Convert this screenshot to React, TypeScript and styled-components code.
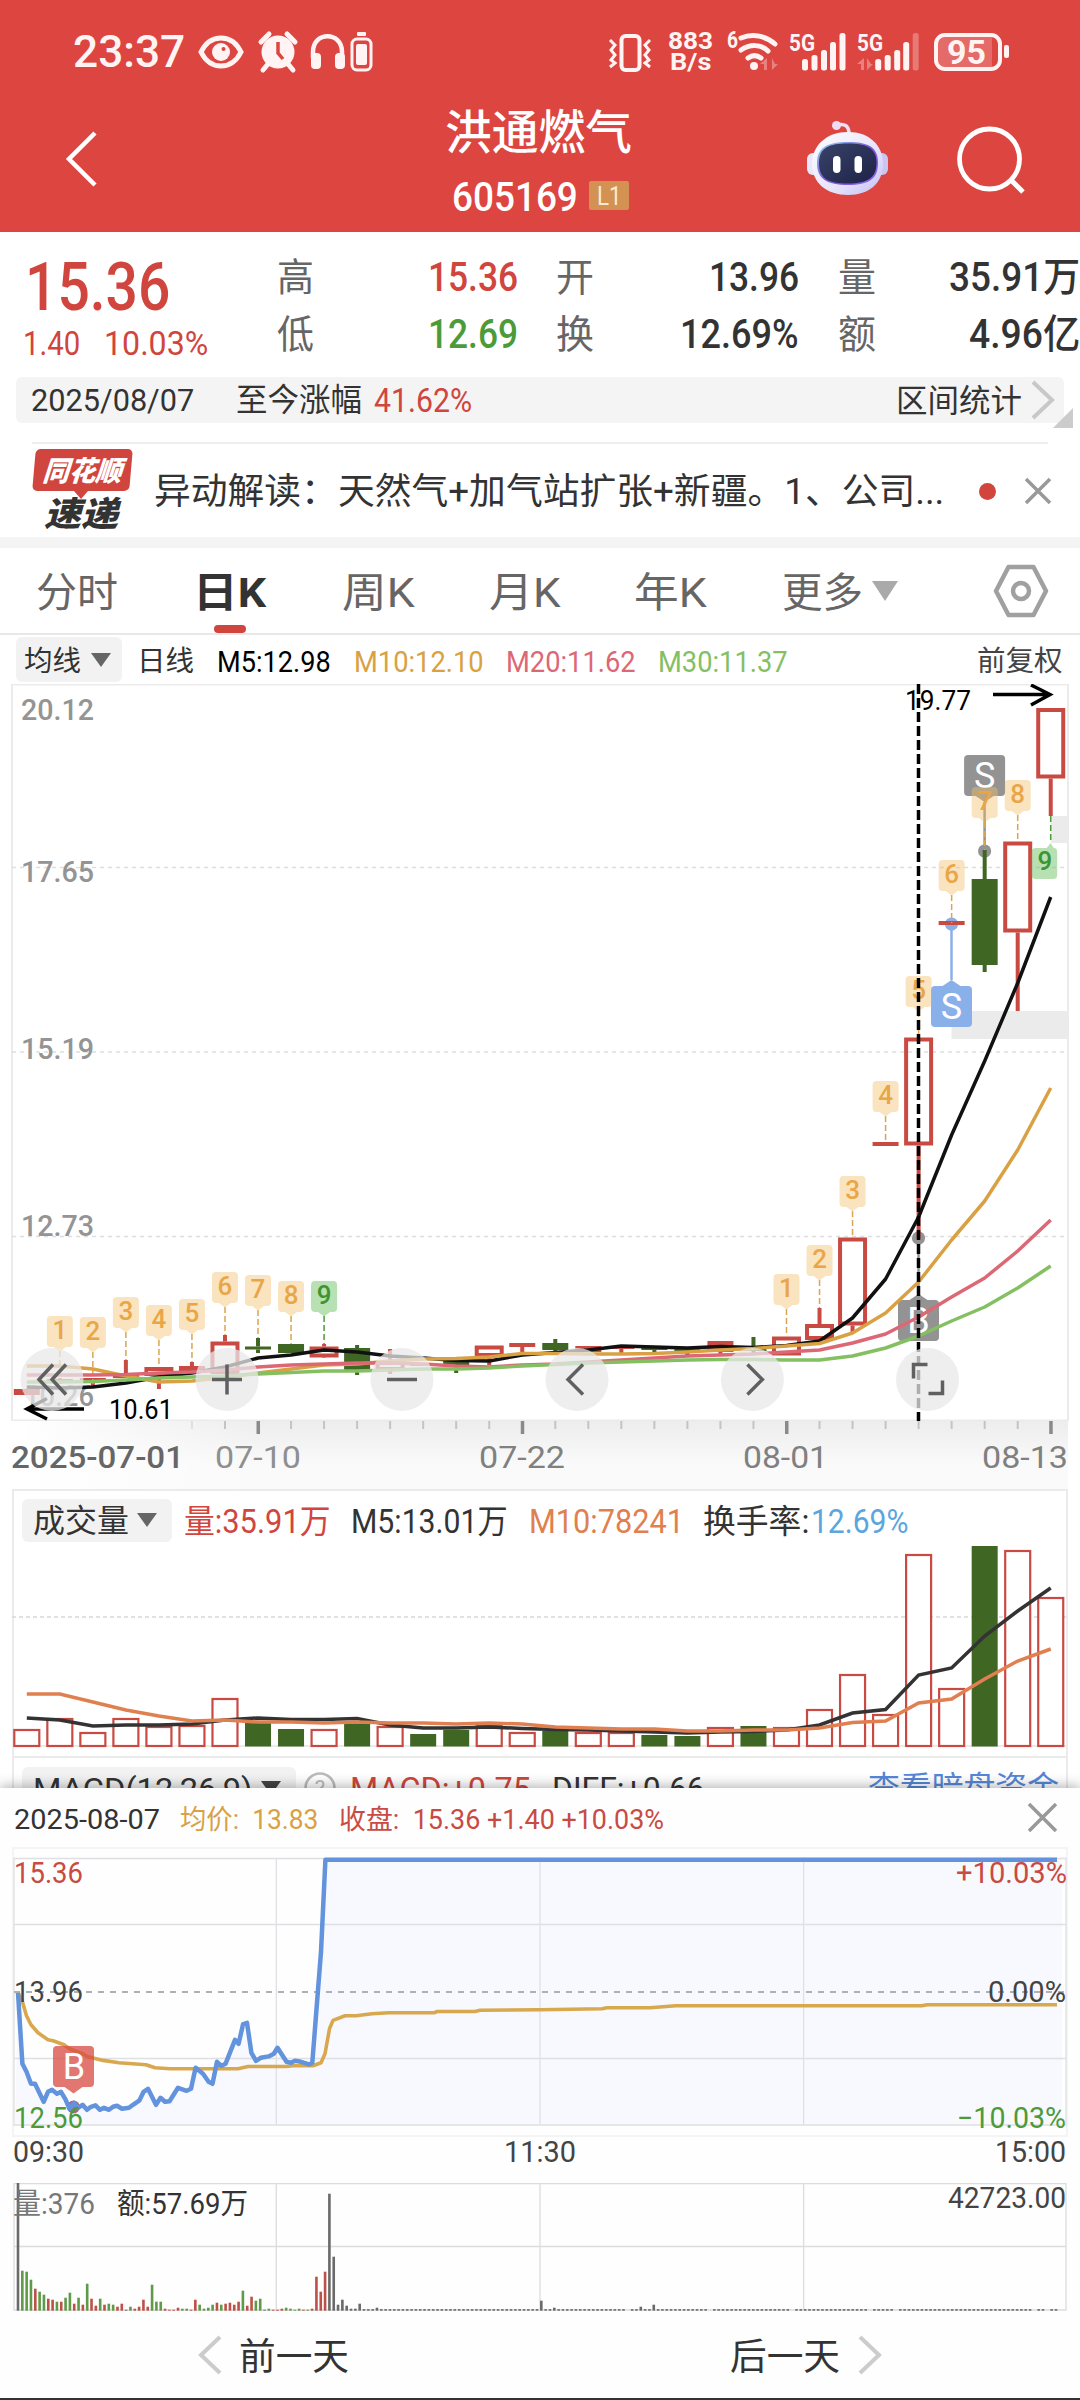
import React, { useLayoutEffect, useRef, useState } from 'react';
import styled, { createGlobalStyle } from 'styled-components';

const FONT = `Roboto, "Noto Sans CJK SC", sans-serif`;
const RED = '#d0453d';
const GREEN = '#4d9a38';
const INK = '#333';
const UP = '#c94a43';
const DOWN = '#3f6623';

const Global = createGlobalStyle`
  body { margin: 0; background: #fff; }
  * { box-sizing: border-box; }
  svg { display: block; flex-shrink: 0; }
  svg text { font-family: ${FONT}; }
`;

/* ---------- fitted text ---------- */
const FitBox = styled.span<{ $w: number; $ml?: number; $mt?: number; $size: number; $color?: string; $weight?: number; $italic?: boolean }>`
  display: block;
  flex: none;
  width: ${(p) => p.$w}px;
  margin-left: ${(p) => p.$ml ?? 0}px;
  margin-top: ${(p) => p.$mt ?? 0}px;
  font-family: ${FONT};
  font-size: ${(p) => p.$size}px;
  font-weight: ${(p) => p.$weight ?? 400};
  font-style: ${(p) => (p.$italic ? 'italic' : 'normal')};
  line-height: 1.17;
  height: 1.17em;
  color: ${(p) => p.$color ?? INK};
  white-space: nowrap;
`;
const FitInner = styled.span`
  display: inline-block;
  transform-origin: 0 50%;
`;
type FitProps = { w: number; size: number; ml?: number; mt?: number; color?: string; weight?: number; italic?: boolean; dy?: number; children: React.ReactNode };
function Fit({ w, size, ml, mt, color, weight, italic, dy = 1.5, children }: FitProps) {
  const ref = useRef<HTMLSpanElement>(null);
  const [scale, setScale] = useState(1);
  useLayoutEffect(() => {
    if (ref.current && ref.current.offsetWidth) setScale(w / ref.current.offsetWidth);
  }, [w, size]);
  return (
    <FitBox $w={w} $ml={ml} $mt={mt} $size={size} $color={color} $weight={weight} $italic={italic}>
      <FitInner ref={ref} style={{ transform: `translateY(${dy}px) scaleX(${scale})` }}>{children}</FitInner>
    </FitBox>
  );
}

/* ---------- page ---------- */
const Screen = styled.main`
  position: relative;
  width: 1080px;
  height: 2400px;
  overflow: hidden;
  display: flex;
  flex-direction: column;
  background: #fff;
`;
const Header = styled.header`
  flex: none;
  height: 232px;
  background: #dd4540;
  display: flex;
  flex-direction: column;
`;
const StatusBar = styled.div`
  display: flex;
  justify-content: space-between;
  height: 80px;
  padding: 0 70px 0 73px;
`;
const StatusGroup = styled.div<{ $gap?: number }>`
  display: flex;
  align-items: center;
  gap: ${(p) => p.$gap ?? 0}px;
  height: 103px;
`;
const SpeedStack = styled.div`
  display: flex;
  flex-direction: column;
  margin: 0 13px 0 16px;
`;
const NavBar = styled.nav`
  display: flex;
  align-items: flex-start;
  height: 152px;
`;
const NavIcon = styled.div<{ $w: number; $pt: number }>`
  flex: none;
  width: ${(p) => p.$w}px;
  padding-top: ${(p) => p.$pt}px;
`;
const TitleBlock = styled.div`
  flex: none;
  width: 427px;
  padding-top: 23px;
`;
const CodeRow = styled.div`
  display: flex;
  align-items: center;
  margin-top: 14px;
`;
const LevelBadge = styled.span`
  display: flex;
  align-items: center;
  width: 40px;
  height: 29px;
  margin-left: 11px;
  padding-left: 8px;
  border-radius: 2px;
  background: #d39152;
`;

const Quote = styled.section`
  flex: none;
  display: flex;
  height: 145px;
  padding-left: 25px;
`;
const PriceBlock = styled.div`
  width: 253px;
  padding-top: 14px;
`;
const ChangeRow = styled.div`
  display: flex;
`;
const StatGrid = styled.div`
  display: grid;
  grid-template-columns: 240px 281px 281px;
  grid-template-rows: 57px 57px;
  padding-top: 16px;
`;
const Stat = styled.div<{ $w: number }>`
  display: flex;
  align-items: center;
  justify-content: space-between;
  width: ${(p) => p.$w}px;
  justify-self: end;
`;
const Spacer = styled.span<{ $w?: number }>`
  flex: ${(p) => (p.$w ? 'none' : '1')};
  width: ${(p) => p.$w ?? 0}px;
`;

const RangeWrap = styled.div`
  flex: none;
  display: flex;
  height: 66px;
  padding-left: 16px;
`;
const RangeBar = styled.div`
  display: flex;
  align-items: center;
  width: 1048px;
  height: 46px;
  padding: 0 9px 0 15px;
  border-radius: 6px;
  background: #f4f4f4;
`;
const Corner = styled.span`
  width: 0;
  height: 0;
  margin: 31px 0 0 -11px;
  border-left: 20px solid transparent;
  border-bottom: 20px solid #ccc;
`;
const News = styled.section`
  flex: none;
  display: flex;
  height: 95px;
  margin: -1px 32px 0;
  border-top: 2px solid #eee;
`;
const Logo = styled.div`
  flex: none;
  width: 122px;
  padding-top: 5px;
`;
const LogoTop = styled.div`
  display: flex;
  align-items: center;
  width: 97px;
  height: 42px;
  margin-left: 2px;
  padding-left: 9px;
  border-radius: 5px;
  background: ${RED};
  transform: skewX(-5deg);
`;
const LogoTip = styled.div`
  width: 0;
  height: 0;
  margin-left: 42px;
  border: 7px solid transparent;
  border-top: 8px solid ${RED};
  border-bottom: 0;
`;
const NewsLine = styled.div`
  display: flex;
  align-items: center;
  height: 94px;
`;
const Dot = styled.i`
  width: 17px;
  height: 17px;
  margin: 0 28px 0 35px;
  border-radius: 50%;
  background: ${RED};
`;
const Band = styled.div`
  flex: none;
  height: 11px;
  background: #f4f4f4;
`;
const Tabs = styled.div`
  flex: none;
  display: flex;
  height: 87px;
  border-bottom: 2px solid #e8e8e8;
`;
const Tab = styled.div<{ $ml: number; $pt?: number }>`
  display: flex;
  flex-direction: column;
  align-items: center;
  margin-left: ${(p) => p.$ml}px;
  padding-top: ${(p) => p.$pt ?? 19}px;
`;
const TabText = styled.div`
  display: flex;
  align-items: center;
  height: 48px;
`;
const Indicator = styled.i`
  width: 32px;
  height: 8px;
  margin-top: 10px;
  border-radius: 4px;
  background: ${RED};
`;
const Arrow = styled.i<{ $w: number; $h: number; $c: string; $ml?: number }>`
  flex: none;
  width: 0;
  height: 0;
  margin-left: ${(p) => p.$ml ?? 8}px;
  border: ${(p) => p.$w / 2}px solid transparent;
  border-top: ${(p) => p.$h}px solid ${(p) => p.$c};
  border-bottom: 0;
`;
const Legend = styled.div<{ $h: number; $pl: number; $pt?: number; $pr?: number }>`
  flex: none;
  display: flex;
  align-items: center;
  height: ${(p) => p.$h}px;
  padding: ${(p) => p.$pt ?? 0}px ${(p) => p.$pr ?? 17}px 0 ${(p) => p.$pl}px;
`;
const Picker = styled.div<{ $w: number; $h: number; $pl: number }>`
  display: flex;
  align-items: center;
  width: ${(p) => p.$w}px;
  height: ${(p) => p.$h}px;
  padding-left: ${(p) => p.$pl}px;
  border-radius: 6px;
  background: #f2f2f2;
`;
const Axis = styled.div`
  flex: none;
  height: 68px;
  background: linear-gradient(90deg, #fff 0 20px, rgba(255, 255, 255, 0) 260px), linear-gradient(#ededed, #fafafa 65%);
  margin-right: 12px;
`;
const Panel = styled.section<{ $h: number }>`
  flex: none;
  height: ${(p) => p.$h}px;
  margin: 0 12px;
  border: 2px solid #ebebeb;
  border-bottom: 0;
`;
const PanelChart = styled.div`
  margin: 0 -14px;
`;

const Sheet = styled.section`
  position: absolute;
  left: 0;
  bottom: 0;
  width: 1080px;
  height: 612px;
  display: flex;
  flex-direction: column;
  background: #fefefe;
  border-bottom: 2px solid #333;
  box-shadow: 0 -2px 12px rgba(0, 0, 0, 0.3);
`;
const SheetHead = styled.div`
  display: flex;
  align-items: center;
  height: 61px;
  padding: 0 22px 0 14px;
`;
const DayNav = styled.div`
  display: flex;
  align-items: center;
  height: 88px;
  padding-left: 198px;
`;

/* ---------- icons ---------- */
const W = '#fff4f3';
const StatusLeftIcons = () => (
  <svg width="176" height="44" viewBox="198 30 176 44">
    <path d="M201 52c5-10 12-14 20-14s15 4 20 14c-5 10-12 14-20 14s-15-4-20-14z" fill="none" stroke={W} strokeWidth="5" />
    <circle cx="221" cy="52" r="9" fill={W} /><circle cx="223.5" cy="49" r="2" fill="#dd4540" />
    <circle cx="278" cy="52" r="16.5" fill={W} />
    <path d="M261 42l8-8M295 42l-8-8M268 64l-5 6M288 64l5 6" stroke={W} strokeWidth="5" strokeLinecap="round" />
    <path d="M278 42v11l5 6" fill="none" stroke="#dd4540" strokeWidth="3.5" />
    <path d="M313 58v-6c0-21 29-21 29 0v6" fill="none" stroke={W} strokeWidth="4.5" />
    <rect x="311" y="53" width="10" height="16" rx="4" fill={W} /><rect x="335" y="53" width="10" height="16" rx="4" fill={W} />
    <rect x="352" y="39" width="19" height="31" rx="5" fill="none" stroke={W} strokeWidth="3" />
    <rect x="356" y="44" width="11" height="21" rx="2" fill={W} /><rect x="357" y="32" width="9" height="4" rx="1" fill={W} />
  </svg>
);
const Vibrate = () => (
  <svg width="44" height="40" viewBox="609 31 44 40">
    <rect x="622.5" y="35" width="18" height="34" rx="4" fill="none" stroke={W} strokeWidth="4" />
    <path d="M611 39l5 5-4 5 4 5-4 5 4 3-5 4M651 39l-5 5 4 5-4 5 4 5-4 3 5 4" fill="none" stroke={W} strokeWidth="3" />
  </svg>
);
const Net = () => (
  <svg width="284" height="44" viewBox="726 29 284 44">
    <text x="727" y="47" fontSize="23" fontWeight="700" fill={W} textLength="11" lengthAdjust="spacingAndGlyphs">6</text>
    <g fill="none" stroke={W} strokeWidth="5" strokeLinecap="round">
      <path d="M741 37c12-5 25-2 34 6M741 49c9-6 20-6 27 1M748 57c4-3 9-3 13 0" />
    </g>
    <circle cx="754" cy="65" r="4" fill={W} />
    <path d="M760 63l7-6v12h-3v-6zM772 57v12l6-6h-3z" fill={W} opacity=".35" />
    <text x="789" y="50" fontSize="24" fontWeight="700" fill={W} textLength="26" lengthAdjust="spacingAndGlyphs">5G</text>
    <text x="857" y="50" fontSize="24" fontWeight="700" fill={W} textLength="26" lengthAdjust="spacingAndGlyphs">5G</text>
    {[[802, 58], [811.5, 54], [821, 49], [830, 41], [839.5, 32]].map(([x, y], i) => (
      <g key={x} fill={W}>
        <rect x={x} y={y} width="6" height={69.5 - y} rx="2.5" />
        <rect x={x + 73.2} y={y} width="6" height={69.5 - y} rx="2.5" opacity={i === 4 ? 0.3 : 1} />
      </g>
    ))}
    <path d="M857 63l7-6v12h-3v-6zM867 57v12l6-6h-2z" fill={W} opacity=".35" />
    <rect x="936" y="34" width="64" height="34" rx="9" fill="none" stroke={W} strokeWidth="4" />
    <path d="M945 36h47v30h-47q-7 0-7-7v-16q0-7 7-7z" fill={W} opacity=".22" />
    <rect x="1004" y="44" width="5" height="13" rx="2" fill={W} />
    <text x="947" y="62.5" fontSize="33" fontWeight="700" fill={W} textLength="39" lengthAdjust="spacingAndGlyphs">95</text>
  </svg>
);
const Robot = () => (
  <svg width="84" height="78" viewBox="806 120 84 78">
    <defs>
      <linearGradient id="rb" x1="0" y1="0" x2="1" y2="1"><stop offset="0" stopColor="#fff" /><stop offset=".6" stopColor="#e6e4fa" /><stop offset="1" stopColor="#c3c1f3" /></linearGradient>
      <linearGradient id="rf" x1="0" y1="0" x2="1" y2="1"><stop offset="0" stopColor="#8fdcf0" /><stop offset=".5" stopColor="#7a52d8" /><stop offset="1" stopColor="#8d62ee" /></linearGradient>
      <linearGradient id="rd" x1="0" y1="0" x2="1" y2="1"><stop offset="0" stopColor="#3a4268" /><stop offset="1" stopColor="#1d2347" /></linearGradient>
    </defs>
    <path d="M837 125c8-2 12 1 12 9" fill="none" stroke="#f3dff0" strokeWidth="3.5" />
    <circle cx="836.5" cy="125.5" r="4.5" fill="#f0dcf0" />
    <rect x="807" y="153" width="14" height="22" rx="6" fill="#e9e8fb" /><rect x="874" y="153" width="14" height="22" rx="6" fill="#c9c7f2" />
    <path d="M848 132c21 0 35 13 35 32s-14 31-35 31-36-12-36-31 15-32 36-32z" fill="url(#rb)" />
    <path d="M848 142c20 0 30 5 30 21s-9 22-30 22-31-6-31-22 11-21 31-21z" fill="url(#rf)" />
    <path d="M848 143.500c19 0 28.500 5 28.500 19.500s-8.500 20.500-28.500 20.500-29-5-29-20.500 10-19.500 29-19.500z" fill="url(#rd)" />
    <rect x="833" y="156" width="7.500" height="17" rx="3.700" fill="#fff" /><rect x="854.500" y="156" width="7.500" height="17" rx="3.700" fill="#fff" />
  </svg>
);
const Chevron = ({ w, h, c, sw, right }: { w: number; h: number; c: string; sw: number; right?: boolean }) => (
  <svg width={w} height={h} viewBox={`0 0 ${w} ${h}`}>
    <path d={right ? `M2 2L${w - 3} ${h / 2}L2 ${h - 2}` : `M${w - 2} 2L3 ${h / 2}L${w - 2} ${h - 2}`} fill="none" stroke={c} strokeWidth={sw} />
  </svg>
);
const Cross = ({ s }: { s: number }) => (
  <svg width={s} height={s} viewBox={`0 0 ${s} ${s}`}><path d={`M2 2L${s - 2} ${s - 2}M${s - 2} 2L2 ${s - 2}`} stroke="#999" strokeWidth="3.5" /></svg>
);

/* ---------- chart data ---------- */
const cx = (i: number) => 26.8 + i * 33.03;
const line = (ys: number[]) => ys.map((y, i) => `${cx(i).toFixed(1)},${y}`).join(' ');

// [index, body top, body bottom, wick top, wick bottom, kind]
type Candle = [number, number, number, number, number, 'r' | 'g' | 'f'];
const candles: Candle[] = [
  [0, 1389, 1395, 1389, 1395, 'f'], [1, 1379, 1382, 1378, 1384, 'f'], [2, 1378, 1382, 1378, 1386, 'f'], [3, 1374, 1378, 1360, 1378, 'f'],
  [4, 1367, 1376, 1367, 1389, 'r'], [5, 1366, 1372, 1362, 1372, 'f'], [6, 1341.5, 1374, 1335, 1374, 'r'], [7, 1346.500, 1349.500, 1338, 1353, 'g'],
  [8, 1344, 1353, 1344, 1353, 'g'], [9, 1346.500, 1357.500, 1344, 1358, 'r'], [10, 1348, 1370, 1345, 1375, 'g'], [11, 1361, 1371, 1349, 1374, 'r'],
  [12, 1363, 1366, 1363, 1366, 'f'], [13, 1360, 1366, 1360, 1373, 'g'], [14, 1345.500, 1357, 1345.500, 1365, 'r'], [15, 1343, 1347, 1343, 1352, 'f'],
  [16, 1343, 1350, 1339, 1352, 'g'], [17, 1346, 1352, 1346, 1352, 'f'], [18, 1346, 1349, 1346, 1353, 'f'], [19, 1347, 1350, 1347, 1353, 'g'],
  [20, 1348, 1351, 1348, 1356, 'g'], [21, 1341, 1352, 1341, 1355, 'f'], [22, 1348, 1351, 1337, 1355, 'g'], [23, 1336.500, 1355.500, 1336.500, 1355, 'r'],
  [24, 1324, 1340, 1308, 1340, 'r'], [25, 1237.500, 1325.500, 1237.500, 1333, 'r'], [26, 1142, 1146, 1142, 1146, 'f'], [27, 1037.500, 1145.500, 1037.500, 1238, 'r'],
  [28, 921, 925, 921, 925, 'f'], [29, 879, 965, 850, 972, 'g'], [30, 841.500, 932.500, 841.500, 1011, 'r'], [31, 708, 778.500, 708, 816, 'r'],
];
const ma5 = [1387, 1388, 1387, 1383, 1377, 1373, 1367, 1358, 1355, 1350, 1352, 1356, 1358, 1360.5, 1361, 1355, 1352.5, 1350, 1346, 1347, 1348, 1346.5, 1347.5, 1345.5, 1341, 1318, 1279, 1217, 1135, 1061, 983, 897];
const ma10 = [1366, 1366, 1369, 1376, 1382, 1381, 1377.5, 1373, 1369, 1365, 1364, 1361, 1359, 1358.5, 1357, 1353.5, 1353.5, 1354, 1354, 1353.5, 1352, 1350, 1348.5, 1346, 1343.5, 1333, 1313, 1282, 1240, 1201, 1150, 1088];
const ma20 = [1375, 1375, 1375, 1374.5, 1373, 1372, 1370, 1367, 1365, 1364, 1363, 1363, 1364, 1366, 1367, 1365, 1364, 1362, 1360, 1358, 1356, 1355, 1354, 1352, 1350, 1343, 1334, 1317, 1297, 1278, 1251, 1220];
const ma30 = [1382, 1382, 1381.5, 1380, 1378, 1377, 1376, 1374, 1372.5, 1371, 1371, 1370, 1369, 1369, 1368, 1366, 1364.5, 1363, 1362, 1361, 1360, 1359.5, 1359.5, 1360, 1360, 1356, 1348, 1336, 1321, 1307, 1288, 1266];
// [index, number, badge top, leader end]
const counts: [number, number, number, number][] = [
  [1, 1, 1316, 1378], [2, 2, 1317, 1384], [3, 3, 1297, 1360], [4, 4, 1305, 1367], [5, 5, 1299, 1362], [6, 6, 1272, 1335], [7, 7, 1275, 1338], [8, 8, 1281, 1344], [9, 9, 1281, 1344],
  [23, 1, 1274, 1336], [24, 2, 1245, 1308], [25, 3, 1176, 1238], [26, 4, 1081, 1143], [27, 5, 976, 1037], [28, 6, 860, 923], [29, 7, 787, 850], [30, 8, 780, 841],
];

const Label = ({ x, y, w, s, c, wt, children }: { x: number; y: number; w: number; s: number; c: string; wt?: number; children: string }) => (
  <text x={x} y={y} fontSize={s} fontWeight={wt ?? 400} fill={c} textLength={w} lengthAdjust="spacingAndGlyphs">{children}</text>
);

function TradeMark({ x, top, up, letter, fill, dot }: { x: number; top: number; up?: boolean; letter: string; fill: string; dot: number }) {
  return (
    <g>
      <rect x={x - 20.5} y={top} width="41" height="41" rx="4" fill={fill} />
      <path d={up ? `M${x - 9} ${top}l9-6 9 6z` : `M${x - 9} ${top + 41}l9 6 9-6z`} fill={fill} />
      <path d={`M${x} ${up ? top - 6 : top + 47}V${dot}`} stroke={fill} strokeWidth="2.500" />
      <circle cx={x} cy={dot} r="6.600" fill={fill} />
      <text x={x} y={top + 33} fontSize="36" fill="#fff" textAnchor="middle">{letter}</text>
    </g>
  );
}

const KChart = () => (
  <svg width="1080" height="737" viewBox="0 684 1080 737">
    <rect x="12" y="684.500" width="1056" height="736" fill="none" stroke="#ebebeb" strokeWidth="2" />
    {[867.5, 1052, 1236.5].map((y) => <path key={y} d={`M12 ${y}H1068`} stroke="#dedede" strokeWidth="1.300" strokeDasharray="4 4" />)}
    <path d="M1051 816h17v27h-17zM951.500 1011h116.500v28h-116.500z" fill="#ebebeb" />
    <Label x={21} y={719.5} w={73} s={30} c="#949494" wt={500}>20.12</Label>
    <Label x={21} y={882} w={73} s={30} c="#949494" wt={500}>17.65</Label>
    <Label x={21} y={1059} w={73} s={30} c="#949494" wt={500}>15.19</Label>
    <Label x={21} y={1236} w={73} s={30} c="#949494" wt={500}>12.73</Label>
    <Label x={24} y={1406} w={70} s={30} c="#949494" wt={500}>10.26</Label>
    <TradeMark x={984.6} top={755} letter="S" fill="#939393" dot={851} />
    <TradeMark x={951.5} top={986} up letter="S" fill="#8ab0ea" dot={924} />
    <TradeMark x={918.5} top={1300} up letter="B" fill="#939393" dot={1238} />
    {candles.map(([i, a, b, wt, wb, k]) => {
      const x = cx(i);
      const c = k === 'g' ? DOWN : UP;
      return (
        <g key={i} fill={c} stroke="none">
          {wt < a && <rect x={x - 2} y={wt} width="4" height={a - wt} />}
          {wb > b && <rect x={x - 2} y={b} width="4" height={wb - b} />}
          {k === 'r'
            ? <rect x={x - 12.5} y={a + 2} width="25" height={Math.max(b - a - 4, 1)} fill={i === 27 ? 'none' : '#fff'} stroke={c} strokeWidth="4" />
            : <rect x={x - 13} y={a} width="26" height={b - a} />}
        </g>
      );
    })}
    {counts.map(([i, n, t, e]) => {
      const x = cx(i);
      const g = n === 9;
      return (
        <g key={i}>
          <path d={`M${x} ${t + 35}V${e}`} stroke={g ? '#4d9a38' : '#dba550'} strokeWidth="1.500" strokeDasharray="6 3" />
          <path d={`M${x - 9} ${t}h18q4 0 4 4v23q0 4-4 4h-3l-6 4.500-6-4.500h-3q-4 0-4-4v-23q0-4 4-4z`} fill={g ? '#70c468' : '#f3bd6a'} opacity={g ? 0.5 : 0.43} />
          <text x={x} y={t + 22.5} fontSize="26" fontWeight="500" textAnchor="middle" fill={g ? '#3f9433' : '#e9a647'}>{n}</text>
        </g>
      );
    })}
    <path d="M1050.700 816V843" stroke="#4d9a38" strokeWidth="1.500" strokeDasharray="6 3" />
    <path d="M1035.700 848h11l4-5 3 5q3.500 0 3.500 4v23q0 4-4 4h-17.500q-4 0-4-4v-23q0-4 4-4z" fill="#70c468" opacity=".5" />
    <text x="1045" y="870" fontSize="26" fontWeight="500" textAnchor="middle" fill="#3f9433">9</text>
    <g fill="none" strokeWidth="3.500" strokeLinejoin="round">
      <polyline points={line(ma5)} stroke="#111" />
      <polyline points={line(ma10)} stroke="#d9a143" />
      <polyline points={line(ma20)} stroke="#dc6876" />
      <polyline points={line(ma30)} stroke="#84bf62" />
    </g>
    <path d="M918.500 684V1421" stroke="#000" strokeWidth="3.500" strokeDasharray="10 4" />
    <g fill="none" stroke="#000" strokeWidth="3.500">
      <path d="M993 694.500H1050M1031 685L1050 694.500L1031 705" />
      <path d="M84 1409H27M47 1398.500L27 1409L47 1419" />
    </g>
    <Label x={905} y={709.5} w={66} s={27} c="#000">19.77</Label>
    <Label x={109} y={1418.5} w={64} s={27} c="#000">10.61</Label>
    {[52, 227, 402, 577, 752.4, 927.5].map((x, i) => (
      <g key={x} transform={`translate(${x} 1379.500)`}>
        <circle r="31.500" fill="#e8e8e8" opacity=".75" />
        <path
          d={['M1-15L-13 0L1 15M14-15L0 0L14 15', 'M-15 0H15M0-15V15', 'M-15 0H15', 'M6-15L-9 0L6 15', 'M-5-15L10 0L-5 15', 'M0-15H-14V-1M1 14H15V1'][i]}
          fill="none" stroke="#606060" strokeWidth="3.500"
        />
      </g>
    ))}
  </svg>
);

const AxisChart = () => (
  <svg width="1080" height="68" viewBox="0 1421 1080 68">
    {Array.from({ length: 27 }, (_, k) => k + 5).map((i) => {
      const major = [7, 15, 23, 31].includes(i);
      return <rect key={i} x={cx(i) - (major ? 1.5 : 1)} y="1421" width={major ? 3.5 : 2} height={major ? 13 : 8} fill={major ? '#8a8a8a' : '#c4c4c4'} opacity={i === 5 ? 0.4 : 1} />;
    })}
    <Label x={11} y={1468} w={173} s={32} c="#666" wt={500}>2025-07-01</Label>
    <Label x={215} y={1468} w={86} s={32} c="#8f8f8f">07-10</Label>
    <Label x={479} y={1468} w={86} s={32} c="#808080">07-22</Label>
    <Label x={743} y={1468} w={85} s={32} c="#808080">08-01</Label>
    <Label x={982} y={1468} w={86} s={32} c="#808080">08-13</Label>
  </svg>
);

const volTop = [1729, 1718, 1732, 1718, 1726, 1725, 1698, 1723, 1729, 1729, 1723, 1726, 1734, 1730, 1725, 1732, 1731, 1732, 1732, 1735, 1736, 1727, 1726, 1727, 1709, 1674, 1714, 1554, 1688, 1546, 1550, 1597];
const volGreen = [7, 8, 10, 12, 13, 16, 19, 20, 22, 29];
const v5 = [1718, 1720, 1726, 1725, 1725, 1724, 1720, 1718, 1719.5, 1719.5, 1718.5, 1725, 1728, 1728, 1727, 1728.5, 1729.5, 1730, 1731, 1732, 1733, 1732, 1731.5, 1730, 1725, 1713, 1709.5, 1675, 1668, 1636, 1611, 1588];
const v10 = [1694, 1694, 1702, 1710, 1716, 1721, 1720, 1722, 1722, 1723, 1722, 1723, 1723, 1724, 1723, 1724, 1727, 1728, 1729, 1729, 1731, 1731, 1730, 1730, 1728, 1722.5, 1721, 1703, 1699, 1679, 1661, 1649];
const VolumeChart = () => (
  <svg width="1080" height="204" viewBox="0 1544 1080 204">
    <path d="M12 1617H1068" stroke="#d8d8d8" strokeWidth="1.300" strokeDasharray="4 3" />
    <path d="M12 1746H1068" stroke="#ebebeb" strokeWidth="2" />
    {volTop.map((t, i) => volGreen.includes(i)
      ? <rect key={i} x={cx(i) - 13} y={t} width="26" height={1746.5 - t} fill={DOWN} />
      : <rect key={i} x={cx(i) - 12.5} y={t + 1} width="25" height={1745 - t} fill="#fff" stroke={UP} strokeWidth="2.200" />)}
    <polyline points={line(v5)} fill="none" stroke="#333" strokeWidth="3.500" />
    <polyline points={line(v10)} fill="none" stroke="#e07f50" strokeWidth="3.500" />
  </svg>
);

const intraday = '18,1994 22.4,2065 26.5,2073 31,2085 35,2085 43.7,2103 48,2093 52,2091 57,2095 61,2093 65.5,2100.5 69.5,2110 74,2104 78,2109 82.6,2106 87,2111 91,2108 95.5,2106.5 100,2111 104,2109 109,2111 113,2108 117,2107 122,2110 129,2109 133,2106 139.5,2101.5 143.6,2093 148,2090 156,2106 160.5,2099 165,2103 169.5,2102.5 178,2089 186.6,2092 191,2090 195.6,2069 203,2075 208.6,2083 212.5,2085 217,2063 221.4,2067 225.5,2065 235,2041 238.6,2045 243,2025.6 247,2024 251.4,2054 256,2062 260.7,2059 268.6,2057.6 273.8,2055 277.5,2049 286.5,2063 291,2064 295,2062 301,2063 309,2065.6 312.3,2064 321,1953 325.4,1861 1057,1861';
const average = '18,1994 22.4,2003 26.5,2017 31,2026 38,2034 48,2041 53,2042 64,2046 69.5,2050 82.6,2055 88,2058 103,2061.6 119,2064 146,2066 155,2069 170,2070 238,2070 248,2067.7 286,2067.7 293,2067 313,2067 321,2064 325,2055 329.5,2030 333,2021.6 345,2017 356,2017 372,2015 389,2014 434,2014 437,2012.7 475,2012.7 480,2011.5 540,2011 602,2010 607,2009 650,2009 676,2007 922,2007 927,2006 1057,2006';
const IntradayChart = () => (
  <svg width="1080" height="336" viewBox="0 1849 1080 336">
    <path d="M13 1850H1067V2138H13z" fill="none" stroke="#f4f4f4" strokeWidth="2" />
    <polygon points={`${intraday} 1062,1861 1062,2127 15,2127`} fill="#f7f9fe" />
    <path d="M14 1860.500H1066V2127H14zM276.300 1860V2127M540 1860V2127M803.600 1860V2127M14 1926.500H1066M14 2060.500H1066" fill="none" stroke="#dfe0e3" strokeWidth="1.300" />
    <path d="M14 1994H1066" stroke="#adb0b5" strokeWidth="1.900" strokeDasharray="6 6" />
    <polyline points={average} fill="none" stroke="#d8a84f" strokeWidth="3.600" strokeLinejoin="round" transform="translate(0 .8)" />
    <g opacity=".75"><rect x="53" y="2048" width="41" height="41" rx="4" fill="#d94a43" /><path d="M64.500 2089l9 6.500 9-6.500z" fill="#d94a43" /></g>
    <circle cx="73.500" cy="2109" r="6.500" fill="#a8638a" />
    <text x="74" y="2081" fontSize="36" fill="#fff" textAnchor="middle">B</text>
    <polyline points={intraday} fill="none" stroke="#6293dc" strokeWidth="4.500" strokeLinejoin="round" transform="translate(0 .8)" />
    <Label x={14} y={1885} w={69} s={29} c={UP}>15.36</Label>
    <Label x={14} y={2003.5} w={69} s={29} c="#444">13.96</Label>
    <Label x={14} y={2129.5} w={69} s={29} c={GREEN}>12.56</Label>
    <Label x={956} y={1884.5} w={111} s={29} c={UP}>+10.03%</Label>
    <Label x={988} y={2003.5} w={78} s={29} c="#444">0.00%</Label>
    <Label x={957} y={2129.5} w={109} s={29} c={GREEN}>−10.03%</Label>
    <Label x={13} y={2164} w={71} s={29} c="#444">09:30</Label>
    <Label x={504} y={2164} w={72} s={29} c="#444">11:30</Label>
    <Label x={995} y={2164} w={71} s={29} c="#444">15:00</Label>
  </svg>
);

const barHeights = [128, 40, 39, 31, 22, 19, 16, 12, 11, 9, 9, 13, 18, 7, 13, 6, 27, 12, 5, 12, 6, 7, 6, 4, 7, 1, 4, 2, 4, 11, 4, 26, 9, 9, 2, 1, 1, 3, 2, 2, 1, 11, 6, 2, 3, 6, 8, 6, 7, 8, 6, 9, 20, 5, 14, 10, 12, 1, 2, 1, 1, 2, 3, 2, 1, 2, 1, 1, 2, 34, 19, 39, 117, 54, 6, 11, 5, 2, 2, 7];
const barKinds = 'kgggrggrrgrggrgrgrrgrggrrgkrrrrgggrrrrggrrggggrgrrrrgrrggrkrrrggggrggrrrrkkkkkkkk'.replace('ggrrrrkkkkkkkk', 'ggrrrrkkkkkkkk');
const colorAt = (i: number) => (i >= 72 || i === 0 || i === 25 || i === 57 ? '#6a6a6a' : i >= 68 || barKinds[i] === 'r' ? '#bd5048' : '#5f9a49');
const lateBars: Record<number, number> = { 83: 3, 121: 10, 124: 3, 144: 4, 147: 6 };
const MinuteVolume = () => (
  <svg width="1080" height="129" viewBox="0 2185 1080 129">
    <path d="M14 2185.700H1066V2312H14zM276.300 2185V2312M540 2185V2312M803.600 2185V2312M14 2248.500H1066" fill="none" stroke="#dcdcdc" strokeWidth="1.300" />
    {Array.from({ length: 241 }, (_, i) => {
      const h = barHeights[i] ?? lateBars[i] ?? ([141, 160, 179, 197, 203, 235, 238].includes(i) ? 0 : 1.6);
      return <rect key={i} x={16.7 + i * 4.325} y={2312.7 - h} width="2.600" height={h} fill={colorAt(i)} />;
    })}
    <Label x={13} y={2215.5} w={82} s={29} c="#777">量:376</Label>
    <Label x={117} y={2215.5} w={131} s={29} c="#333">额:57.69万</Label>
    <Label x={948} y={2209.5} w={118} s={29} c="#444">42723.00</Label>
  </svg>
);

export default function App() {
  return (
    <Screen>
      <Global />
      <Header>
        <StatusBar>
          <StatusGroup $gap={13}>
            <Fit w={112} size={45} color={W} weight={500} dy={0.5}>23:37</Fit>
            <StatusLeftIcons />
          </StatusGroup>
          <StatusGroup>
            <Vibrate />
            <SpeedStack>
              <Fit w={45} mt={1} size={24.5} color={W} weight={700} dy={0}>883</Fit>
              <Fit w={41} ml={2} mt={-8} size={24.5} color={W} weight={700} dy={0}>B/s</Fit>
            </SpeedStack>
            <Net />
          </StatusGroup>
        </StatusBar>
        <NavBar>
          <NavIcon $w={379} $pt={50}>
            <svg width="100" height="58" viewBox="0 130 100 58"><path d="M95 133L69 159L95 185" fill="none" stroke="#fff" strokeWidth="4.500" /></svg>
          </NavIcon>
          <TitleBlock>
            <Fit w={187} ml={66} size={47} color="#fff" weight={500}>洪通燃气</Fit>
            <CodeRow>
              <Fit w={126} ml={73} size={41} color="#fff" weight={500}>605169</Fit>
              <LevelBadge><Fit w={25} size={25} color="#fbe9d2" dy={1}>L1</Fit></LevelBadge>
            </CodeRow>
          </TitleBlock>
          <NavIcon $w={150} $pt={40}><Robot /></NavIcon>
          <NavIcon $w={80} $pt={44}>
            <svg width="72" height="72" viewBox="956 124 72 72"><circle cx="989.500" cy="159" r="30" fill="none" stroke="#fff" strokeWidth="4.800" /><path d="M1011 180l12 12" stroke="#fff" strokeWidth="5" /></svg>
          </NavIcon>
        </NavBar>
      </Header>

      <Quote>
        <PriceBlock>
          <Fit w={145} size={66} color={RED} weight={500} dy={2.5}>15.36</Fit>
          <ChangeRow>
            <Fit w={57} ml={-2} size={34} color={RED} dy={1}>1.40</Fit>
            <Fit w={104} ml={24} size={34} color={RED} dy={1}>10.03%</Fit>
          </ChangeRow>
        </PriceBlock>
        <StatGrid>
          <Stat $w={241}><Fit w={37} size={39} color="#666">高</Fit><Fit w={90} size={40} color={RED} weight={500}>15.36</Fit></Stat>
          <Stat $w={243}><Fit w={38} size={39} color="#666">开</Fit><Fit w={90} size={40} weight={500}>13.96</Fit></Stat>
          <Stat $w={242}><Fit w={38} size={39} color="#666">量</Fit><Fit w={131} size={40} weight={500}>35.91万</Fit></Stat>
          <Stat $w={241}><Fit w={37} size={39} color="#666">低</Fit><Fit w={90} size={40} color={GREEN} weight={500}>12.69</Fit></Stat>
          <Stat $w={243}><Fit w={38} size={39} color="#666">换</Fit><Fit w={119} size={40} weight={500}>12.69%</Fit></Stat>
          <Stat $w={242}><Fit w={38} size={39} color="#666">额</Fit><Fit w={111} size={40} weight={500}>4.96亿</Fit></Stat>
        </StatGrid>
      </Quote>

      <RangeWrap>
        <RangeBar>
          <Fit w={163} size={32} dy={0.5}>2025/08/07</Fit>
          <Fit w={126} ml={42} size={32} dy={0.5}>至今涨幅</Fit>
          <Fit w={98} ml={12} size={33} color={RED} dy={0.5}>41.62%</Fit>
          <Spacer />
          <Fit w={126} size={32}>区间统计</Fit>
          <Spacer $w={9} />
          <Chevron w={24} h={40} c="#c8c8c8" sw={4} right />
        </RangeBar>
        <Corner />
      </RangeWrap>

      <News>
        <Logo>
          <LogoTop><Fit w={79} size={28} color="#fff" weight={900} italic>同花顺</Fit></LogoTop>
          <LogoTip />
          <Fit w={74} ml={12} mt={-6} size={34} weight={900} italic dy={2}>速递</Fit>
        </Logo>
        <NewsLine>
          <Fit w={790} size={36.5} dy={1}>异动解读：天然气+加气站扩张+新疆。1、公司...</Fit>
          <Dot />
          <Cross s={28} />
        </NewsLine>
      </News>
      <Band />

      <Tabs>
        <Tab $ml={36}><TabText><Fit w={82} size={41} color="#666" dy={2.5}>分时</Fit></TabText></Tab>
        <Tab $ml={75}><TabText><Fit w={73} size={41} weight={700} dy={2.5}>日K</Fit></TabText><Indicator /></Tab>
        <Tab $ml={76}><TabText><Fit w={73} size={41} color="#666" dy={2.5}>周K</Fit></TabText></Tab>
        <Tab $ml={74}><TabText><Fit w={72} size={41} color="#666" dy={2.5}>月K</Fit></TabText></Tab>
        <Tab $ml={73}><TabText><Fit w={73} size={41} color="#666" dy={2.5}>年K</Fit></TabText></Tab>
        <Tab $ml={75}><TabText><Fit w={81} size={41} color="#666" dy={2.5}>更多</Fit><Arrow $w={26} $h={20} $c="#aaa" $ml={9} /></TabText></Tab>
        <Tab $ml={95} $pt={16}>
          <svg width="56" height="54" viewBox="0 0 56 54">
            <path d="M15.500 3h25L53 27L40.500 51h-25L3 27z" fill="none" stroke="#a0a0a0" strokeWidth="4.500" strokeLinejoin="round" />
            <circle cx="28" cy="27" r="8" fill="none" stroke="#a0a0a0" strokeWidth="4.500" />
          </svg>
        </Tab>
      </Tabs>

      <Legend $h={49} $pl={16}>
        <Picker $w={106} $h={45} $pl={8}><Fit w={57} size={28.5}>均线</Fit><Arrow $w={20} $h={14} $c="#666" $ml={10} /></Picker>
        <Fit w={57} ml={15} size={28.5}>日线</Fit>
        <Fit w={114} ml={23} size={30} color="#000">M5:12.98</Fit>
        <Fit w={130} ml={23} size={30} color="#d9a143">M10:12.10</Fit>
        <Fit w={130} ml={22} size={30} color="#dc6876">M20:11.62</Fit>
        <Fit w={130} ml={22} size={30} color="#84bf62">M30:11.37</Fit>
        <Spacer />
        <Fit w={86} size={28.5} color="#444">前复权</Fit>
      </Legend>
      <KChart />
      <Axis><AxisChart /></Axis>

      <Panel $h={267}>
        <Legend $h={53} $pl={8} $pt={5}>
          <Picker $w={150} $h={43} $pl={11}><Fit w={96} size={32}>成交量</Fit><Arrow $w={20} $h={14} $c="#666" $ml={8} /></Picker>
          <Fit w={147} ml={12} size={32.5} color={RED}>量:35.91万</Fit>
          <Fit w={157} ml={20} size={32.5}>M5:13.01万</Fit>
          <Fit w={155} ml={21} size={32.5} color="#e07f50">M10:78241</Fit>
          <Fit w={106} ml={19} size={32.5}>换手率:</Fit>
          <Fit w={97} ml={2} size={32.5} color="#5ba6de">12.69%</Fit>
        </Legend>
        <PanelChart><VolumeChart /></PanelChart>
      </Panel>
      <Panel $h={100}>
        <Legend $h={60} $pl={8} $pr={7}>
          <Picker $w={274} $h={43} $pl={11}><Fit w={219} size={32}>MACD(12,26,9)</Fit><Arrow $w={20} $h={14} $c="#444" $ml={9} /></Picker>
          <Spacer $w={8} />
          <svg width="32" height="32" viewBox="0 0 32 32"><circle cx="16" cy="16" r="14.500" fill="none" stroke="#bbb" strokeWidth="2.500" /><text x="16" y="24" fontSize="22" textAnchor="middle" fill="#bbb">?</text></svg>
          <Fit w={181} ml={14} size={32.5} color={RED}>MACD:+0.75</Fit>
          <Fit w={153} ml={21} size={32.5}>DIFF:+0.66</Fit>
          <Spacer />
          <Fit w={191} size={32} color="#5587d8" dy={0.5}>查看暗盘资金</Fit>
        </Legend>
      </Panel>

      <Sheet>
        <SheetHead>
          <Fit w={146} size={28.5}>2025-08-07</Fit>
          <Fit w={138} ml={20} size={27.5} color="#d9a143">均价:&nbsp; 13.83</Fit>
          <Fit w={325} ml={21} size={27.5} color={UP}>收盘:&nbsp; 15.36 +1.40 +10.03%</Fit>
          <Spacer />
          <Cross s={31} />
        </SheetHead>
        <IntradayChart />
        <MinuteVolume />
        <DayNav>
          <Chevron w={24} h={40} c="#ccc" sw={4} />
          <Fit w={110} ml={17} size={37}>前一天</Fit>
          <Fit w={110} ml={381} size={37}>后一天</Fit>
          <Spacer $w={18} />
          <Chevron w={24} h={40} c="#ccc" sw={4} right />
        </DayNav>
      </Sheet>
    </Screen>
  );
}
